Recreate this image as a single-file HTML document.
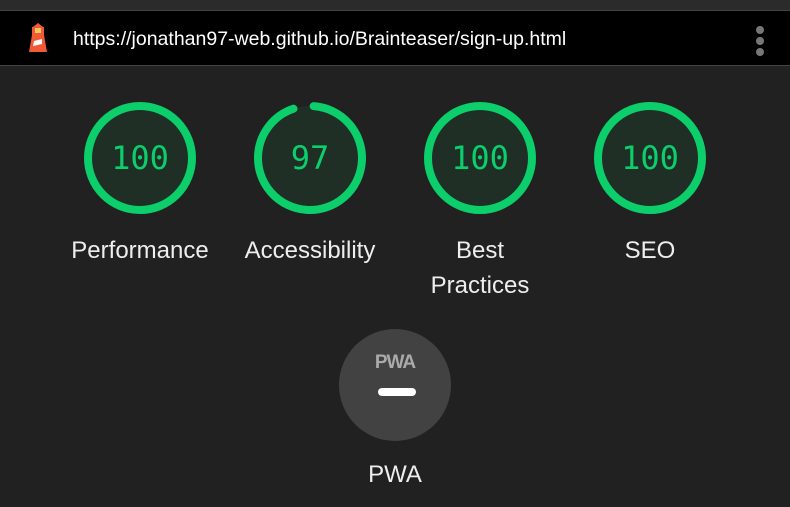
<!DOCTYPE html>
<html><head><style>
body{margin:0;width:790px;height:507px;background:#212121;overflow:hidden;font-family:"Liberation Sans",sans-serif;position:relative}
.top{position:absolute;left:0;top:0;width:790px;height:10px;background:#2b2b2b;border-bottom:1px solid #444}
.bar{position:absolute;left:0;top:11px;width:790px;height:54px;background:#000;border-bottom:1px solid #444}
.url{position:absolute;left:73px;color:#fff;font-size:19.5px}
.dots span{position:absolute;left:756px;width:8px;height:8px;border-radius:50%;background:#777}
.g{position:absolute;top:100px;width:160px;text-align:center}
.g svg{display:block;margin:0 auto}
.lab{color:#eee;font-size:24px;line-height:35px;margin-top:17px}
</style></head><body>
<div class="top"></div>
<div class="bar">
<svg style="position:absolute;left:26px;top:10px" width="24" height="34" viewBox="0 0 24 34">
<path d="M7 6 L12 2 L17 6 Z" fill="#f05a36"/><rect x="6" y="6" width="12" height="8" fill="#f05a36"/><rect x="9" y="7" width="6" height="5" fill="#f4c95a"/>
<path d="M6 14 L18 14 L21 31 L3 31 Z" fill="#f05a36"/><path d="M8 20 L16 18 L16 23 L7 25 Z" fill="#fff"/></svg>
<div class="url" style="top:17px">https://jonathan97-web.github.io/Brainteaser/sign-up.html</div>
<div class="dots"><span style="top:15px"></span><span style="top:26px"></span><span style="top:37px"></span></div>
</div>
<div class="g" style="left:60px"><svg width="116" height="116"><circle cx="58" cy="58" r="52" fill="#1f2f26" stroke="#0cce6b" stroke-width="8"/><text x="58" y="69" text-anchor="middle" font-family="DejaVu Sans Mono,monospace" font-size="32" fill="#0cce6b">100</text></svg><div class="lab">Performance</div></div>
<div class="g" style="left:230px"><svg width="116" height="116"><circle cx="58" cy="58" r="52" fill="#1f2f26"/><circle cx="58" cy="58" r="52" fill="none" stroke="#0cce6b" stroke-width="8" stroke-linecap="round" stroke-dasharray="306 400" transform="rotate(-86 58 58)"/><text x="58" y="69" text-anchor="middle" font-family="DejaVu Sans Mono,monospace" font-size="32" fill="#0cce6b">97</text></svg><div class="lab">Accessibility</div></div>
<div class="g" style="left:400px"><svg width="116" height="116"><circle cx="58" cy="58" r="52" fill="#1f2f26" stroke="#0cce6b" stroke-width="8"/><text x="58" y="69" text-anchor="middle" font-family="DejaVu Sans Mono,monospace" font-size="32" fill="#0cce6b">100</text></svg><div class="lab">Best<br>Practices</div></div>
<div class="g" style="left:570px"><svg width="116" height="116"><circle cx="58" cy="58" r="52" fill="#1f2f26" stroke="#0cce6b" stroke-width="8"/><text x="58" y="69" text-anchor="middle" font-family="DejaVu Sans Mono,monospace" font-size="32" fill="#0cce6b">100</text></svg><div class="lab">SEO</div></div>
<div class="g" style="left:315px;top:327px"><svg width="116" height="116"><circle cx="58" cy="58" r="56" fill="#424242"/><text x="58" y="41" text-anchor="middle" font-family="Liberation Sans,sans-serif" font-weight="bold" font-size="19" fill="#aaa" letter-spacing="-1">PWA</text><rect x="41" y="61" width="38" height="8" rx="4" fill="#fff"/></svg><div class="lab" style="margin-top:14px">PWA</div></div>
</body></html>
